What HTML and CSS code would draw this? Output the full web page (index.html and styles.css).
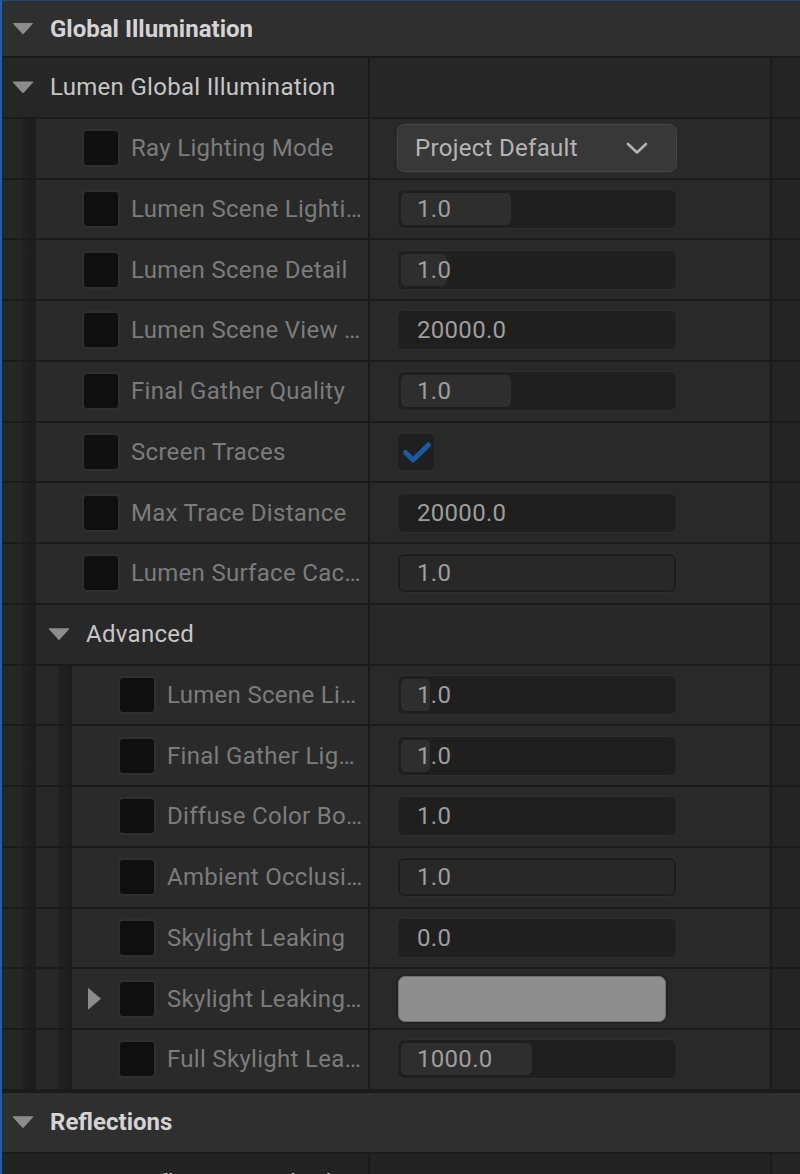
FILE: index.html
```html
<!DOCTYPE html>
<html lang="en">
  <head>
    <meta charset="UTF-8" />
    <title>Post Process Volume - Global Illumination</title>
    <link rel="stylesheet" href="styles.css">
  </head>
  <body>
    <div class="panel">
      <!-- Global Illumination section -->
      <div class="section first">
        <span class="arrow-down"></span>
        <span class="section-title">Global Illumination</span>
      </div>

      <div class="row">
        <div class="name category">
          <span class="arrow-down"></span>
          <span class="cat-title">Lumen Global Illumination</span>
        </div>
        <div class="value category"></div>
        <div class="reset category"></div>
      </div>

      <div class="row">
        <div class="name"><span class="indent"></span>
          <div class="prop"><span class="slot"></span><span class="box"></span><span class="label">Ray Lighting Mode</span></div>
        </div>
        <div class="value">
          <div class="combo">
            <span>Project Default</span>
            <svg width="22" height="13" viewBox="0 0 22 13"><path d="M2 2 L11 10.5 L20 2" fill="none" stroke="#b3b3b3" stroke-width="2.6" stroke-linecap="round" stroke-linejoin="round"/></svg>
          </div>
        </div>
        <div class="reset"></div>
      </div>

      <div class="row">
        <div class="name"><span class="indent"></span>
          <div class="prop"><span class="slot"></span><span class="box"></span><span class="label">Lumen Scene Lighting Quality</span></div>
        </div>
        <div class="value"><div class="num"><span class="fill" style="width: 110px"></span><span class="num-text">1.0</span></div></div>
        <div class="reset"></div>
      </div>

      <div class="row">
        <div class="name"><span class="indent"></span>
          <div class="prop"><span class="slot"></span><span class="box"></span><span class="label">Lumen Scene Detail</span></div>
        </div>
        <div class="value"><div class="num"><span class="fill" style="width: 46px"></span><span class="num-text">1.0</span></div></div>
        <div class="reset"></div>
      </div>

      <div class="row">
        <div class="name"><span class="indent"></span>
          <div class="prop"><span class="slot"></span><span class="box"></span><span class="label">Lumen Scene View Distance</span></div>
        </div>
        <div class="value"><div class="num"><span class="num-text">20000.0</span></div></div>
        <div class="reset"></div>
      </div>

      <div class="row">
        <div class="name"><span class="indent"></span>
          <div class="prop"><span class="slot"></span><span class="box"></span><span class="label">Final Gather Quality</span></div>
        </div>
        <div class="value"><div class="num"><span class="fill" style="width: 110px"></span><span class="num-text">1.0</span></div></div>
        <div class="reset"></div>
      </div>

      <div class="row">
        <div class="name"><span class="indent"></span>
          <div class="prop"><span class="slot"></span><span class="box"></span><span class="label">Screen Traces</span></div>
        </div>
        <div class="value">
          <span class="check">
            <svg width="36" height="36" viewBox="0 0 36 36"><path d="M7.5 18.5 L15 26 L30.5 11" fill="none" stroke="#1d5ba0" stroke-width="5" stroke-linecap="round" stroke-linejoin="round"/></svg>
          </span>
        </div>
        <div class="reset"></div>
      </div>

      <div class="row">
        <div class="name"><span class="indent"></span>
          <div class="prop"><span class="slot"></span><span class="box"></span><span class="label">Max Trace Distance</span></div>
        </div>
        <div class="value"><div class="num"><span class="num-text">20000.0</span></div></div>
        <div class="reset"></div>
      </div>

      <div class="row">
        <div class="name"><span class="indent"></span>
          <div class="prop"><span class="slot"></span><span class="box"></span><span class="label">Lumen Surface Cache Resolution</span></div>
        </div>
        <div class="value"><div class="num alt"><span class="num-text">1.0</span></div></div>
        <div class="reset"></div>
      </div>

      <!-- Advanced -->
      <div class="row">
        <div class="name"><span class="indent"></span>
          <div class="category sub">
            <span class="arrow-down"></span>
            <span class="cat-title">Advanced</span>
          </div>
        </div>
        <div class="value sub-bg"></div>
        <div class="reset"></div>
      </div>

      <div class="row">
        <div class="name"><span class="indent"></span><span class="indent two"></span>
          <div class="prop"><span class="slot"></span><span class="box"></span><span class="label">Lumen Scene Lighting Update Speed</span></div>
        </div>
        <div class="value"><div class="num"><span class="fill" style="width: 29px"></span><span class="num-text">1.0</span></div></div>
        <div class="reset"></div>
      </div>

      <div class="row">
        <div class="name"><span class="indent"></span><span class="indent two"></span>
          <div class="prop"><span class="slot"></span><span class="box"></span><span class="label">Final Gather Lighting Update Speed</span></div>
        </div>
        <div class="value"><div class="num"><span class="fill" style="width: 29px"></span><span class="num-text">1.0</span></div></div>
        <div class="reset"></div>
      </div>

      <div class="row">
        <div class="name"><span class="indent"></span><span class="indent two"></span>
          <div class="prop"><span class="slot"></span><span class="box"></span><span class="label">Diffuse Color Boost</span></div>
        </div>
        <div class="value"><div class="num"><span class="num-text">1.0</span></div></div>
        <div class="reset"></div>
      </div>

      <div class="row">
        <div class="name"><span class="indent"></span><span class="indent two"></span>
          <div class="prop"><span class="slot"></span><span class="box"></span><span class="label">Ambient Occlusion Intensity</span></div>
        </div>
        <div class="value"><div class="num alt"><span class="num-text">1.0</span></div></div>
        <div class="reset"></div>
      </div>

      <div class="row">
        <div class="name"><span class="indent"></span><span class="indent two"></span>
          <div class="prop"><span class="slot"></span><span class="box"></span><span class="label">Skylight Leaking</span></div>
        </div>
        <div class="value"><div class="num"><span class="num-text">0.0</span></div></div>
        <div class="reset"></div>
      </div>

      <div class="row">
        <div class="name"><span class="indent"></span><span class="indent two"></span>
          <div class="prop"><span class="slot"><span class="arrow-right"></span></span><span class="box"></span><span class="label">Skylight Leaking Color</span></div>
        </div>
        <div class="value"><span class="swatch"></span></div>
        <div class="reset"></div>
      </div>

      <div class="row end">
        <div class="name"><span class="indent"></span><span class="indent two"></span>
          <div class="prop"><span class="slot"></span><span class="box"></span><span class="label">Full Skylight Leaking Distance</span></div>
        </div>
        <div class="value"><div class="num"><span class="fill" style="width: 131px"></span><span class="num-text">1000.0</span></div></div>
        <div class="reset"></div>
      </div>

      <!-- Reflections section -->
      <div class="section">
        <span class="arrow-down"></span>
        <span class="section-title">Reflections</span>
      </div>

      <div class="row">
        <div class="name plain">
          <span class="label on">Reflection Method</span>
        </div>
        <div class="value plain"></div>
        <div class="reset"></div>
      </div>
    </div>
  </body>
</html>
```

FILE: styles.css
```css
body {
  margin: 0;
  background-color: #1b1b1b;
  font-family: Roboto, "Liberation Sans", sans-serif;
  font-size: 24px;
  letter-spacing: 0.3px;
  overflow: hidden;
}

.panel {
  width: 798px;
  height: 1173px;
  border-left: 2px solid #1b5fae;
  border-top: 1px solid #1d4a7e;
  overflow: hidden;
}

/* big section headers */
.section {
  display: flex;
  align-items: center;
  height: 58.75px;
  padding-left: 10px;
  background-color: #2f2f2f;
  border-bottom: 2px solid #1b1b1b;
}

.section.first {
  height: 55px;
}

.section-title {
  margin-left: 16px;
  font-weight: bold;
  letter-spacing: 0;
  color: #d4d4d4;
}

.arrow-down {
  width: 22px;
  height: 12px;
  background-color: #8c8c8c;
  clip-path: polygon(0 0, 100% 0, 50% 100%);
  border-radius: 2px;
  flex: none;
}

.arrow-right {
  display: block;
  width: 13px;
  height: 22px;
  margin-left: 16px;
  background-color: #8c8c8c;
  clip-path: polygon(0 0, 100% 50%, 0 100%);
}

/* property rows */
.row {
  display: grid;
  grid-template-columns: 366px 400px 1fr;
  column-gap: 2px;
  height: 58.75px;
  background-color: #1b1b1b;
  border-bottom: 2px solid #1b1b1b;
}

.row.end {
  border-bottom-width: 4px;
}

.name {
  display: flex;
  min-width: 0;
  background-color: #2a2a2a;
}

.name.category {
  align-items: center;
  padding-left: 10px;
  background-color: #262626;
}

.name.plain {
  align-items: center;
  padding-left: 118px;
  background-color: #232323;
}

.category.sub {
  display: flex;
  align-items: center;
  flex: 1;
  padding-left: 12px;
  background-color: #282828;
}

.cat-title {
  margin-left: 16px;
  color: #c6c6c6;
}

.indent {
  width: 34px;
  flex: none;
  background: linear-gradient(to right, #262626 20px, #222222 20px, #1c1c1c 34px);
}

.indent.two {
  width: 36px;
  background: linear-gradient(to right, #282828 22px, #222222 22px, #1c1c1c 36px);
}

.prop {
  display: flex;
  align-items: center;
  flex: 1;
  min-width: 0;
  padding-right: 1px;
}

.slot {
  width: 46px;
  flex: none;
}

.box {
  width: 38px;
  height: 38px;
  box-sizing: border-box;
  flex: none;
  background-color: #0f0f0f;
  border: 2px solid #2f2f2f;
  border-radius: 5px;
}

.label {
  margin-left: 11px;
  color: #7c7c7c;
  white-space: nowrap;
  overflow: hidden;
  text-overflow: ellipsis;
}

.label.on {
  color: #c4c4c4;
}

.value {
  display: flex;
  align-items: center;
  padding-left: 27px;
  background-color: #292929;
}

.value.category {
  background-color: #262626;
}

.value.sub-bg {
  background-color: #282828;
}

.value.plain {
  background-color: #232323;
}

.reset {
  background-color: #242424;
}

/* value widgets */
.combo {
  display: flex;
  align-items: center;
  justify-content: space-between;
  width: 280px;
  height: 48px;
  box-sizing: border-box;
  padding: 0 28px 0 17px;
  background-color: #383838;
  border: 1px solid #474747;
  border-radius: 7px;
  color: #b5b5b5;
}

.num {
  display: grid;
  width: 280px;
  height: 40px;
  box-sizing: border-box;
  padding: 3px;
  background-color: #1f1f1f;
  border: 1px solid #2e2e2e;
  border-radius: 7px;
}

.num.alt {
  background-color: #282828;
  box-shadow: inset 0 0 0 2px #1d1d1d;
}

.fill {
  grid-area: 1 / 1;
  background-color: #2e2e2e;
  border-radius: 5px;
}

.num-text {
  grid-area: 1 / 1;
  align-self: center;
  padding-left: 16px;
  color: #9e9e9e;
}

.check {
  display: block;
  width: 38px;
  height: 38px;
  box-sizing: border-box;
  background-color: #1f1f1f;
  border: 1px solid #2c2c2c;
  border-radius: 5px;
}

.check svg {
  display: block;
}

.swatch {
  display: block;
  width: 266px;
  height: 44px;
  margin-left: 1px;
  background-color: #8e8e8e;
  border: 1px solid #6f6f6f;
  border-radius: 7px;
  box-shadow: 0 0 0 2px #232323;
}
```
